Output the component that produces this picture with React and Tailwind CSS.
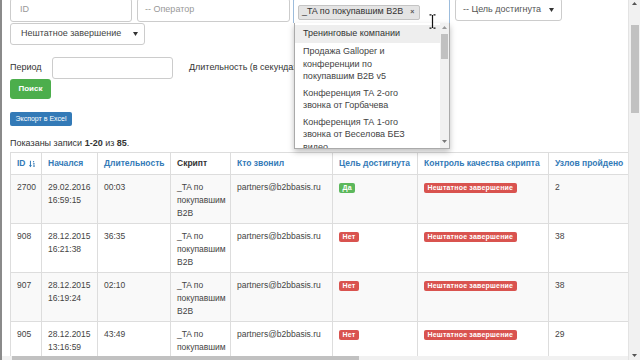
const rows = [
  { id: "2700", date: "29.02.2016", time: "16:59:15", dur: "00:03", ok: true, nodes: "2" },
  { id: "908", date: "28.12.2015", time: "16:21:38", dur: "36:35", ok: false, nodes: "38" },
  { id: "907", date: "28.12.2015", time: "16:19:24", dur: "02:10", ok: false, nodes: "38" },
  { id: "905", date: "28.12.2015", time: "13:16:59", dur: "43:49", ok: false, nodes: "29" },
]

const options = [
  ["Тренинговые компании"],
  ["Продажа Galloper и", "конференции по", "покупавшим B2B v5"],
  ["Конференция ТА 2-ого", "звонка от Горбачева"],
  ["Конференция ТА 1-ого", "звонка от Веселова БЕЗ", "видео"],
]

const Caret = () => (
  <svg width="5" height="4" viewBox="0 0 5 4" className="shrink-0">
    <path d="M0 0 L5 0 L2.5 4 Z" fill="#333" />
  </svg>
)

const SortIcon = () => (
  <svg width="9" height="10" viewBox="0 0 9 10" className="ml-[3px]">
    <path d="M2 0.5 V8.5" stroke="#337ab7" strokeWidth="1.4" />
    <path d="M0 6.5 L2 9.5 L4 6.5 Z" fill="#337ab7" />
    <rect x="5.5" y="1" width="1.6" height="1.6" fill="#337ab7" />
    <rect x="5.5" y="4" width="2.4" height="1.6" fill="#337ab7" />
    <rect x="5.5" y="7" width="3.2" height="1.6" fill="#337ab7" />
  </svg>
)

const Label = ({ color, children }) => (
  <span className={`inline-block ${color} text-white font-bold text-[7px] leading-[8px] px-[3.5px] py-[1px] rounded-[2px] whitespace-nowrap tracking-[0.2px]`}>
    {children}
  </span>
)

export default function App() {
  const th = "text-left align-top font-bold px-[6px] pt-[4px] pb-[4px] leading-[13px] border border-[#ddd] border-b-[1.5px] whitespace-nowrap"
  const td = "align-top px-[6px] pt-[6px] pb-[3px] leading-[13px] border border-[#ddd]"

  return (
    <div className="w-[640px] h-[360px] flex overflow-hidden bg-white font-['Liberation_Sans',Arial,sans-serif] text-[9px] text-[#444]">
      <div className="w-[2px] shrink-0 bg-[#8a8a8a]" />

      <main className="relative w-[626px] shrink-0 flex flex-col">
        <div className="pl-[8px] flex flex-col">
          {/* filters row */}
          <div className="flex items-start -mt-[2px]">
            <div className="w-[122px] h-[24px] border border-[#ccc] rounded-[3px] flex items-center pl-[9px] text-[#999]">ID</div>
            <div className="ml-[5px] w-[153px] h-[24px] border border-[#ccc] rounded-[3px] flex items-center pl-[7px] text-[#999]">-- Оператор</div>
            <div className="ml-[3px] w-[157px] h-[25px] border border-[#9cbcdc] border-b-0 rounded-t-[3px] flex items-center pl-[4px] pt-[2px]">
              <span className="flex items-center h-[15px] bg-[#e4e4e4] border border-[#c4c4c4] rounded-[2px] pl-[3px] pr-[5px] text-[#333]">
                _TA по покупавшим B2B
                <span className="ml-[7px] text-[7px] font-bold text-[#555]">×</span>
              </span>
            </div>
            <div className="ml-[5px] w-[107px] h-[23px] border border-[#ccc] rounded-[3px] flex items-center justify-between px-[7px] text-[#555]">
              <span>-- Цель достигнута</span>
              <Caret />
            </div>
          </div>

          <div className="w-[135px] h-[22px] border border-[#ccc] rounded-[3px] flex items-center justify-between pl-[10px] pr-[6px] text-[#444]">
            <span>Нештатное завершение</span>
            <Caret />
          </div>

          <div className="mt-[12px] flex items-center h-[22px]">
            <span className="w-[42px] text-[#333]">Период</span>
            <div className="w-[121px] h-[22px] border border-[#ccc] rounded-[3px]" />
            <span className="ml-[16px] text-[#333] whitespace-nowrap">Длительность (в секундах)</span>
          </div>

          <button className="w-[41px] h-[20px] bg-[#4cae4c] rounded-[3px] text-white text-[8px] font-bold flex items-center justify-center">
            Поиск
          </button>

          <button className="mt-[13px] w-[62px] h-[14px] bg-[#337ab7] rounded-[2px] text-white text-[7px] flex items-center justify-center">
            Экспорт в Excel
          </button>

          <div className="mt-[11px] h-[13px] leading-[13px] text-[#333]">
            Показаны записи <b>1-20</b> из <b>85</b>.
          </div>
        </div>

        {/* table */}
        <div className="mt-[2px] flex-1 min-h-0 overflow-hidden pl-[8px] text-[8.5px]">
          <table className="table-fixed border-collapse w-[680px]">
            <colgroup>
              <col className="w-[31px]" />
              <col className="w-[56px]" />
              <col className="w-[73px]" />
              <col className="w-[60px]" />
              <col className="w-[102px]" />
              <col className="w-[85px]" />
              <col className="w-[131px]" />
              <col className="w-[142px]" />
            </colgroup>
            <thead>
              <tr className="text-[#337ab7]">
                <th className={th}><span className="flex items-center">ID<SortIcon /></span></th>
                <th className={th}>Начался</th>
                <th className={th}>Длительность</th>
                <th className={`${th} text-[#333]`}>Скрипт</th>
                <th className={th}>Кто звонил</th>
                <th className={th}>Цель достигнута</th>
                <th className={th}>Контроль качества скрипта</th>
                <th className={th}>Узлов пройдено</th>
              </tr>
            </thead>
            <tbody>
              {rows.map((r, i) => (
                <tr key={r.id} className={i % 2 === 0 ? "bg-[#f9f9f9]" : "bg-white"}>
                  <td className={td}>{r.id}</td>
                  <td className={td}>{r.date}<br />{r.time}</td>
                  <td className={td}>{r.dur}</td>
                  <td className={td}>_TA по<br />покупавшим<br />B2B</td>
                  <td className={td}>partners@b2bbasis.ru</td>
                  <td className={td}>
                    {r.ok ? <Label color="bg-[#5cb85c]">Да</Label> : <Label color="bg-[#d9534f]">Нет</Label>}
                  </td>
                  <td className={td}>
                    <Label color="bg-[#d9534f]">Нештатное завершение</Label>
                  </td>
                  <td className={td}>{r.nodes}</td>
                </tr>
              ))}
            </tbody>
          </table>
        </div>

        {/* horizontal scrollbar */}
        <div className="h-[4px] shrink-0 bg-[#f1f1f1] pl-[10px]">
          <div className="w-[347px] h-full bg-[#c1c1c1]" />
        </div>

        {/* select2 dropdown */}
        <div className="absolute left-[292px] top-[23px] w-[156px] h-[126px] bg-white border border-[#aaa] border-t-0 shadow-[0_3px_6px_rgba(0,0,0,0.25)] flex">
          <div className="flex-1 flex flex-col pt-[2px] text-[#444] overflow-hidden">
            {options.map((o, i) => (
              <div
                key={i}
                className={i === 0 ? "shrink-0 h-[18px] flex items-center pl-[8px] bg-[#eee] text-[#333]" : "shrink-0 pl-[8px] py-[2px] leading-[12.5px]"}
              >
                {o.map((line, j) => <div key={j} className="whitespace-nowrap">{line}</div>)}
              </div>
            ))}
          </div>
          <div className="w-[9px] shrink-0 bg-[#f1f1f1] flex flex-col items-center">
            <svg width="5" height="3" viewBox="0 0 5 3" className="mt-[3px]"><path d="M0 3 L5 3 L2.5 0 Z" fill="#999" /></svg>
            <div className="mt-[5px] w-[7px] h-[25px] bg-[#c1c1c1]" />
            <div className="flex-1" />
            <svg width="5" height="3" viewBox="0 0 5 3" className="mb-[5px]"><path d="M0 0 L5 0 L2.5 3 Z" fill="#777" /></svg>
          </div>
        </div>

        {/* I-beam cursor */}
        <svg width="7" height="15" viewBox="0 0 7 15" className="absolute left-[427px] top-[14px]">
          <path d="M0.5 0.8 H2.5 M4.5 0.8 H6.5 M3.5 1 V14 M0.5 14.2 H2.5 M4.5 14.2 H6.5" stroke="#111" strokeWidth="1.2" fill="none" />
        </svg>
      </main>

      {/* page scrollbar */}
      <div className="w-[12px] shrink-0 bg-[#f1f1f1] border-l border-[#e3e3e3] flex flex-col items-center">
        <svg width="5" height="3" viewBox="0 0 5 3" className="mt-[2px]"><path d="M0 3 L5 3 L2.5 0 Z" fill="#555" /></svg>
        <div className="mt-[20px] w-[8px] h-[88px] bg-[#c1c1c1]" />
        <div className="flex-1" />
        <svg width="5" height="3" viewBox="0 0 5 3" className="mb-[3px]"><path d="M0 0 L5 0 L2.5 3 Z" fill="#555" /></svg>
      </div>
    </div>
  )
}
